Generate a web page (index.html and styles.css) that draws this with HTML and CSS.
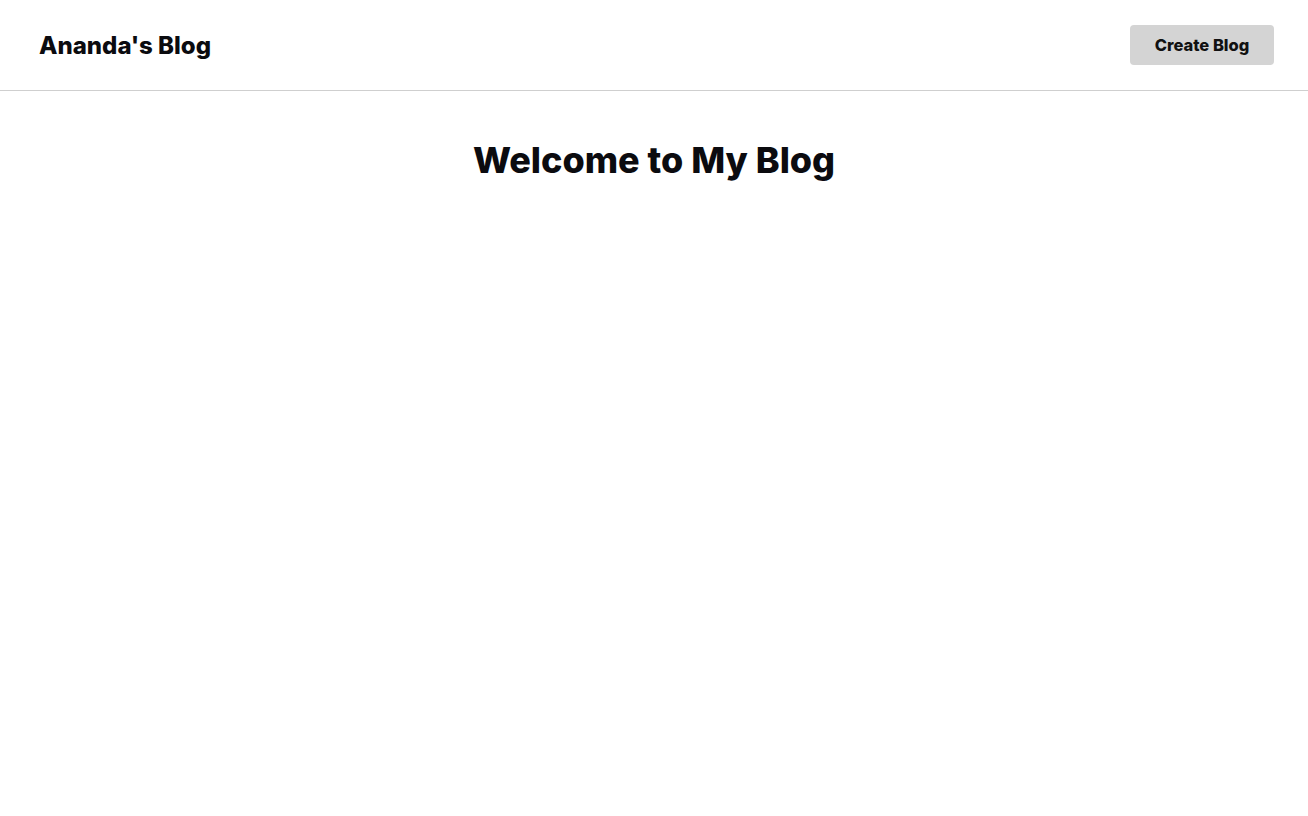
FILE: index.html
```html
<!DOCTYPE html>
<html lang="en">
<head>
<meta charset="utf-8">
<title>Ananda's Blog</title>
<link rel="stylesheet" href="styles.css">
</head>
<body>
<header class="site-header">
  <div class="logo">Ananda's Blog</div>
  <button class="create-btn">Create Blog</button>
</header>
<main class="main">
  <h1 class="title">Welcome to My Blog</h1>
</main>
</body>
</html>
```
FILE: styles.css
```css
html, body {
  margin: 0;
  padding: 0;
  background: #fff;
  font-family: Inter, "Liberation Sans", sans-serif;
  color: #0b0b0f;
}
.site-header {
  height: 91px;
  box-sizing: border-box;
  border-bottom: 1px solid #cfcfcf;
  display: flex;
  align-items: center;
  justify-content: space-between;
  padding: 0 34px 0 39px;
}
.logo {
  font-size: 24px;
  font-weight: 800;
}
.create-btn {
  width: 144px;
  height: 40px;
  background: #d4d4d4;
  border: none;
  border-radius: 4px;
  font-family: inherit;
  font-size: 16.5px;
  font-weight: 800;
  color: #111;
}
.main {
  display: flex;
  flex-direction: column;
  align-items: center;
}
.title {
  margin: 48px 0 0;
  font-size: 36px;
  font-weight: 800;
  line-height: 1.2;
}
```
